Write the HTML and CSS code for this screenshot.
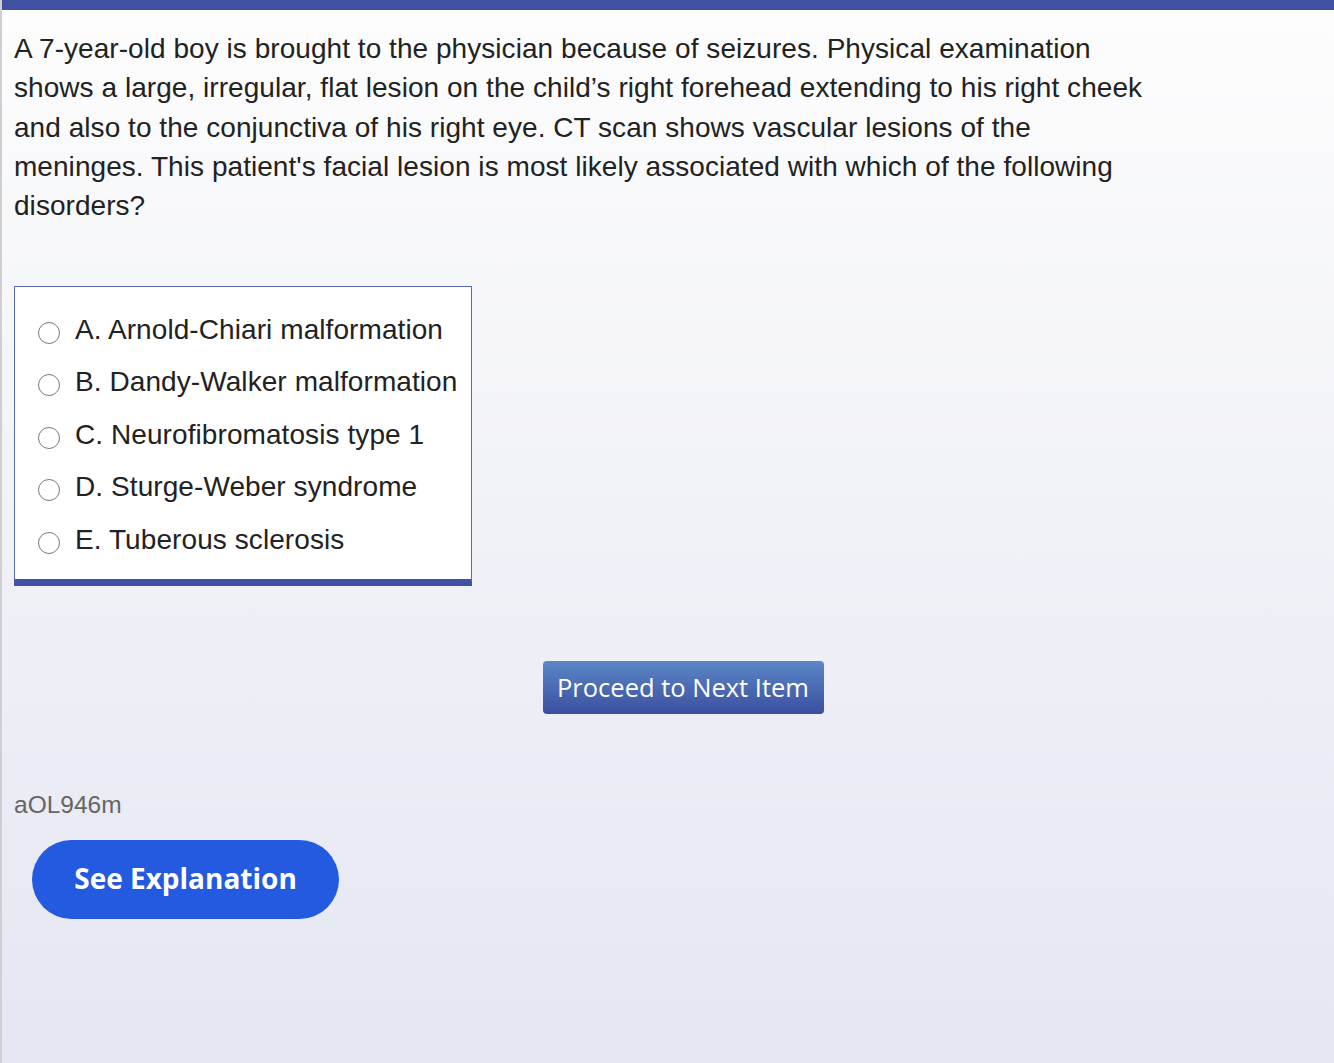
FILE: index.html
```html
<!DOCTYPE html>
<html>
<head>
<meta charset="utf-8">
<link rel="stylesheet" href="styles.css">
</head>
<body>
<div class="topbar"></div>
<main class="page">
  <p class="stem">A 7-year-old boy is brought to the physician because of seizures. Physical examination shows a large, irregular, flat lesion on the child’s right forehead extending to his right cheek and also to the conjunctiva of his right eye. CT scan shows vascular lesions of the meninges. This patient's facial lesion is most likely associated with which of the following disorders?</p>
  <div class="choices">
    <label class="choice"><span class="radio"></span><span>A. Arnold-Chiari malformation</span></label>
    <label class="choice"><span class="radio"></span><span>B. Dandy-Walker malformation</span></label>
    <label class="choice"><span class="radio"></span><span>C. Neurofibromatosis type 1</span></label>
    <label class="choice"><span class="radio"></span><span>D. Sturge-Weber syndrome</span></label>
    <label class="choice"><span class="radio"></span><span>E. Tuberous sclerosis</span></label>
  </div>
  <div class="next-row"><button class="next-btn">Proceed to Next Item</button></div>
  <div class="qid">aOL946m</div>
  <button class="explain-btn">See Explanation</button>
</main>
</body>
</html>
```
FILE: styles.css
```css
html, body { margin: 0; padding: 0; height: 100%; }
body {
  background: linear-gradient(to bottom, #fdfdfd 0%, #e4e6f2 100%);
  font-family: "Liberation Sans", Arial, sans-serif;
  color: #222;
  border-left: 2px solid #cfcfd2;
  box-sizing: border-box;
  min-height: 1063px;
}
.topbar { height: 10px; background: #3f51a0; }
.page { padding: 0 0 0 12px; }
.stem {
  margin: 19px 0 0;
  width: 1145px;
  font-size: 28px;
  letter-spacing: 0.05px;
  line-height: 39.25px;
  color: #222;
}
.choices {
  margin-top: 61px;
  width: 458px;
  box-sizing: border-box;
  background: #fff;
  border: 1px solid #5b6ab4;
  border-bottom: 7px solid #3f51a0;
  padding: 16px 0 13px 23px;
  display: flex;
  flex-direction: column;
}
.choice {
  display: flex;
  align-items: center;
  gap: 15px;
  height: 52.5px;
  font-size: 28px;
  letter-spacing: 0.08px;
  color: #222;
}
.radio {
  width: 20px; height: 20px;
  border: 1.5px solid #7a7a7a;
  border-radius: 50%;
  background: #fff;
  flex: none;
  margin-top: 6px;
}
.next-row {
  display: flex;
  justify-content: center;
  padding-left: 18px;
  margin-top: 75px;
}
.next-btn {
  width: 281px; height: 53px;
  border: none;
  border-radius: 4px;
  background: linear-gradient(to bottom, #5b87c7 0%, #3c4f9f 100%);
  color: #fff;
  font-family: "Open Sans", sans-serif;
  font-size: 25.5px;
  font-weight: 400;
  padding: 0;
}
.qid {
  margin-top: 77px;
  font-size: 24.5px;
  color: #666;
}
.explain-btn {
  display: block;
  margin: 21px 0 0 18px;
  width: 307px; height: 79px;
  border: none;
  border-radius: 40px;
  background: #235ae0;
  color: #fff;
  font-family: "Open Sans", sans-serif;
  font-weight: 700;
  font-size: 28px;
  padding: 0 0 2px 0;
}
```
